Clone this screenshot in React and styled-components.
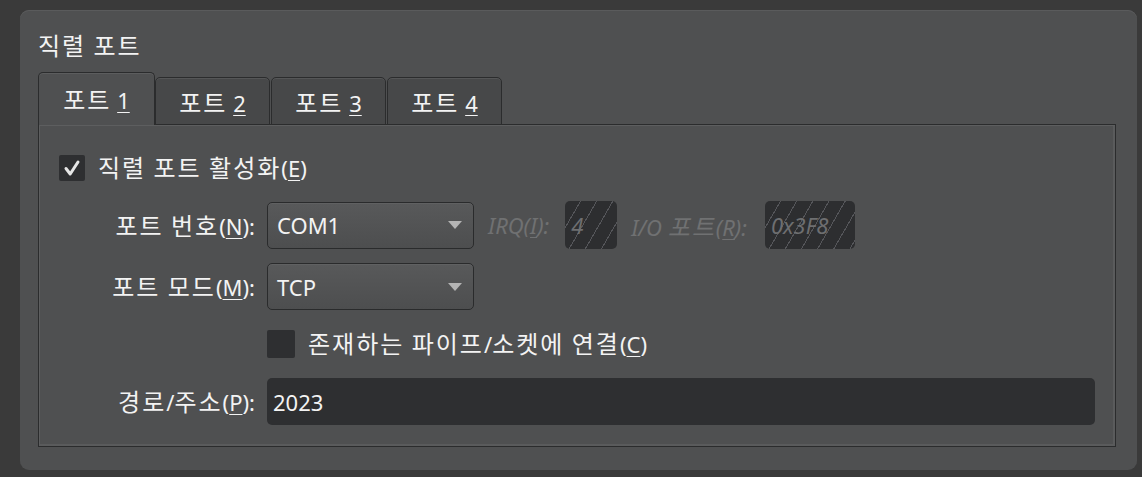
import React from 'react';
import styled, { createGlobalStyle } from 'styled-components';

const GlobalStyle = createGlobalStyle`
  html, body {
    margin: 0;
    padding: 0;
    background: #3a3a3a;
    font-family: "Noto Sans", "Noto Sans CJK KR", sans-serif;
    color: #f3f3f3;
  }
`;

const Page = styled.div`
  width: 1142px;
  height: 477px;
  box-sizing: border-box;
  padding: 10px 5px 7px 20px;
`;

const GroupBox = styled.div`
  height: 100%;
  box-sizing: border-box;
  background: #4f5051;
  border-radius: 9px;
  box-shadow: inset 0 1px 0 #5a5b5c;
  padding: 22px 21px 23px 18px;
  display: flex;
  flex-direction: column;
`;

const Title = styled.div`
  font-size: 22px;
  line-height: 26px;
  margin-bottom: 13px;
`;

// hangul in the reference is drawn larger than Noto CJK's at the same size
const Ko = styled.span`
  font-family: "Noto Sans CJK KR", sans-serif;
  font-size: 24px;
  letter-spacing: 2px;
`;

const TabBar = styled.div`
  display: flex;
  align-items: flex-end;
  height: 53px;
  margin-bottom: -1px;
  position: relative;
  z-index: 1;
`;

const Tab = styled.div`
  box-sizing: border-box;
  width: ${p => (p.active ? 117 : 115)}px;
  height: ${p => (p.active ? 53 : 48)}px;
  background: ${p => (p.active ? '#4f5051' : '#474849')};
  border: 1px solid #2b2c2d;
  border-bottom: ${p => (p.active ? 'none' : '1px solid #2b2c2d')};
  border-radius: 5px 5px 0 0;
  box-shadow: inset 0 1px 0 ${p => (p.active ? '#5c5d5e' : '#555657')};
  display: flex;
  justify-content: center;
  padding-top: ${p => (p.active ? 11 : 9)}px;
  font-size: 22px;
  line-height: 30px;
  margin-right: ${p => (p.active ? 0 : 1)}px;
  white-space: nowrap;
`;

const TabPanel = styled.div`
  flex: 1;
  background: #4f5051;
  border: 1px solid #2b2c2d;
  box-shadow: inset 1px 1px 0 #5d5e5f, inset -2px -2px 0 #5a5b5c;
  padding: 29px 20px 0 20px;
  display: flex;
  flex-direction: column;
`;

const Mn = styled.u`
  text-decoration-thickness: 1px;
  text-underline-offset: 3px;
`;

const CheckRow = styled.label`
  display: flex;
  align-items: center;
  gap: 13px;
  font-size: 22px;
  line-height: 28px;
  height: 27px;
  white-space: nowrap;
`;

const CheckBox = styled.span`
  width: ${p => p.size}px;
  height: ${p => p.size}px;
  flex: none;
  background: #2e2f31;
  border-radius: 2px;
  display: flex;
  align-items: center;
  justify-content: center;
`;

const Row = styled.div`
  display: flex;
  align-items: center;
  margin-top: ${p => p.gap}px;
`;

const Label = styled.div`
  width: 196px;
  text-align: right;
  font-size: 22px;
  line-height: 28px;
  margin-right: 12px;
  flex: none;
  white-space: nowrap;
`;

const Combo = styled.div`
  box-sizing: border-box;
  width: 207px;
  height: 47px;
  border: 1px solid #2a2b2c;
  border-radius: 5px;
  background: linear-gradient(#58595a, #4d4e4f);
  box-shadow: inset 0 1px 0 #606162;
  display: flex;
  align-items: center;
  justify-content: space-between;
  padding: 0 10px 0 9px;
  font-size: 22px;
`;

const Arrow = styled.span`
  width: 0;
  height: 0;
  border-left: 7px solid transparent;
  border-right: 7px solid transparent;
  border-top: 8px solid #b4b4b4;
  margin-right: 1px;
`;

const DisabledLabel = styled.span`
  font-size: 22px;
  font-style: italic;
  color: #707172;
  margin: 0 ${p => p.after}px 0 14px;
  white-space: nowrap;
`;

const HatchBox = styled.div`
  box-sizing: border-box;
  width: ${p => p.w}px;
  height: 48px;
  flex: none;
  border-radius: 5px;
  background-color: #2d2e30;
  background-image: repeating-linear-gradient(
    120deg,
    transparent 0 13px,
    #55565a 13px 14px
  );
  display: flex;
  align-items: center;
  padding-left: 6px;
  font-size: 22px;
  font-style: italic;
  color: #6e6f71;
`;

const TextInput = styled.div`
  box-sizing: border-box;
  flex: 1;
  height: 47px;
  border-radius: 5px;
  background: #2e2f31;
  display: flex;
  align-items: center;
  padding-left: 6px;
  font-size: 22px;
`;

const CheckMark = () => (
  <svg width="18" height="18" viewBox="0 0 18 18">
    <path d="M3 9.5 L7.2 15 L15 3" fill="none" stroke="#e6e6e6" strokeWidth="3" strokeLinecap="round" strokeLinejoin="round" />
  </svg>
);

const tabs = ['1', '2', '3', '4'];

export default function App() {
  return (
    <Page>
      <GlobalStyle />
      <GroupBox>
        <Title><Ko>직렬 포트</Ko></Title>
        <TabBar>
          {tabs.map((n, i) => (
            <Tab key={n} active={i === 0}>
              <span><Ko>포트</Ko>&nbsp;<Mn>{n}</Mn></span>
            </Tab>
          ))}
        </TabBar>
        <TabPanel>
          <CheckRow>
            <CheckBox size={26}><CheckMark /></CheckBox>
            <span><Ko>직렬 포트 활성화</Ko>(<Mn>E</Mn>)</span>
          </CheckRow>
          <Row gap={20}>
            <Label><Ko>포트 번호</Ko>(<Mn>N</Mn>):</Label>
            <Combo>COM1<Arrow /></Combo>
            <DisabledLabel after={16}>IRQ(<Mn>I</Mn>):</DisabledLabel>
            <HatchBox w={52}>4</HatchBox>
            <DisabledLabel after={18}>I/O <Ko>포트</Ko>(<Mn>R</Mn>):</DisabledLabel>
            <HatchBox w={90}>0x3F8</HatchBox>
          </Row>
          <Row gap={14}>
            <Label><Ko>포트 모드</Ko>(<Mn>M</Mn>):</Label>
            <Combo>TCP<Arrow /></Combo>
          </Row>
          <Row gap={20}>
            <Label />
            <CheckRow>
              <CheckBox size={28} />
              <span><Ko>존재하는 파이프</Ko>/<Ko>소켓에 연결</Ko>(<Mn>C</Mn>)</span>
            </CheckRow>
          </Row>
          <Row gap={21}>
            <Label><Ko>경로</Ko>/<Ko>주소</Ko>(<Mn>P</Mn>):</Label>
            <TextInput>2023</TextInput>
          </Row>
        </TabPanel>
      </GroupBox>
    </Page>
  );
}
